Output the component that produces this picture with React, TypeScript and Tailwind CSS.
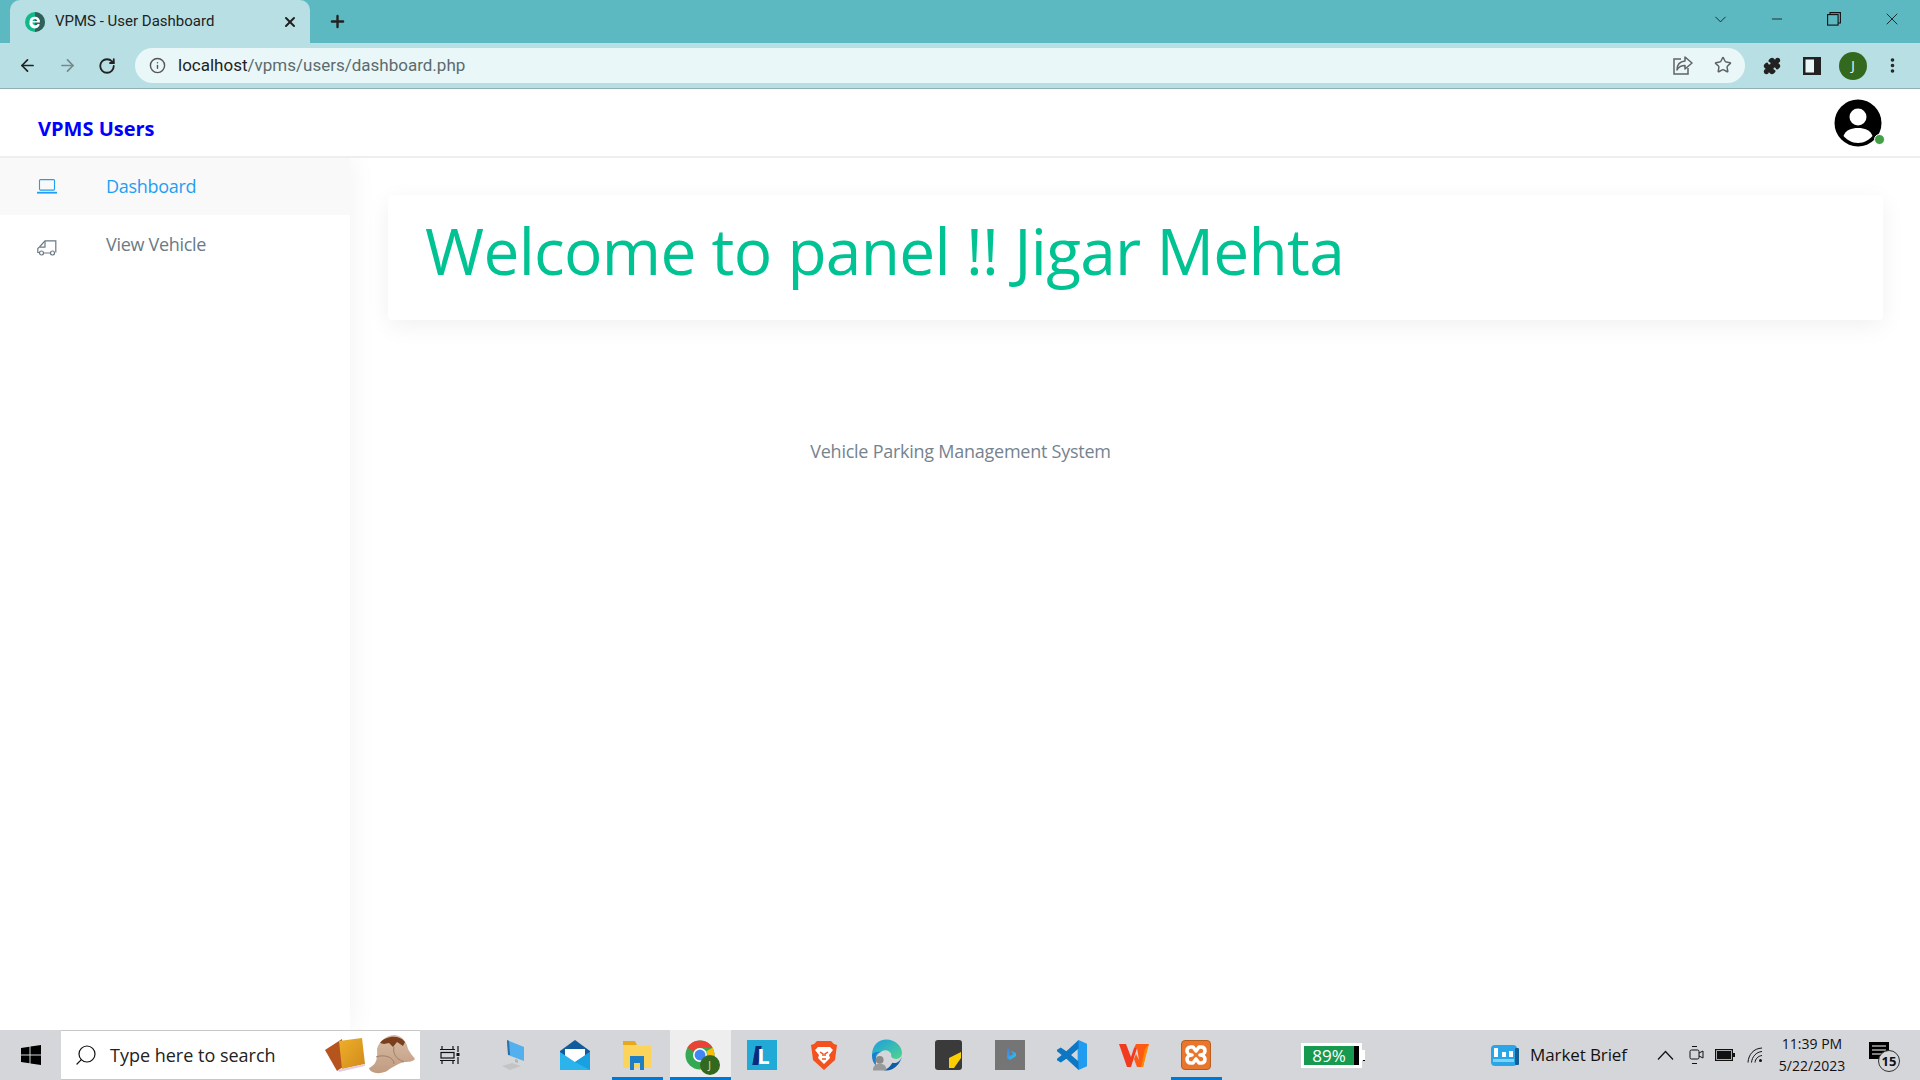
import React from "react";
import { ArrowLeft, ArrowRight, RotateCw, Info, Star, Puzzle, X, Plus, ChevronDown, Minus, MoreVertical, Search } from "lucide-react";

const Sans = "[font-family:'Open_Sans',sans-serif]";

function Favicon() {
  return (
    <svg width="20" height="20" viewBox="0 0 20 20">
      <circle cx="10" cy="10" r="10" fill="#10b98a" />
      <path d="M10 0a10 10 0 0 1 0 20z" fill="#3a4a50" opacity="0.8" />
      <path d="M4.500 10a5.300 5.300 0 0 1 10.400-1.400v2H7.300a3 3 0 0 0 5.600 1.100l1.900.8A5.300 5.300 0 0 1 4.500 10zm2.900-1h5a2.600 2.600 0 0 0-5 0z" fill="#fff" />
    </svg>
  );
}

function Avatar() {
  return (
    <div className="relative w-[48px] h-[48px]">
      <svg width="48" height="48" viewBox="0 0 48 48">
        <circle cx="24" cy="24" r="23.5" fill="#000" />
        <circle cx="24" cy="18" r="8.500" fill="#fff" />
        <path d="M9.500 37c2-6 8-8 14.500-8s12.500 2 14.500 8c-3 3.500-8 7-14.500 7S12.500 40.500 9.500 37z" fill="#fff" />
      </svg>
      <span className="absolute right-[-3px] bottom-[2px] w-[9px] h-[9px] rounded-full bg-[#43a047] border border-white box-content" />
    </div>
  );
}

function Chrome() {
  return (
    <div className="relative w-[30px] h-[30px] ml-[-2px]">
      <svg width="30" height="30" viewBox="0 0 32 32">
        <circle cx="16" cy="16" r="15.500" fill="#34a853" />
        <path d="M16 .5a15.500 15.500 0 0 1 13.400 7.750H16a7.750 7.750 0 0 0-6.700 3.900L2.600 8.300A15.500 15.500 0 0 1 16 .5z" fill="#ea4335" />
        <path d="M29.400 8.250A15.500 15.500 0 0 1 16 31.500l6.700-11.600A7.750 7.750 0 0 0 22.700 12z" fill="#fbbc05" />
        <circle cx="16" cy="16" r="7.500" fill="#fff" />
        <circle cx="16" cy="16" r="5.800" fill="#4285f4" />
      </svg>
      <span className={`absolute right-[-5px] bottom-[-5px] w-[20px] h-[20px] rounded-full bg-[#33691e] text-[#d8e4c8] text-[10px] flex items-center justify-center ${Sans}`}>J</span>
    </div>
  );
}

function TaskIcon({ active, light, children, w = 62, className = "" }: { active?: boolean; light?: boolean; children: React.ReactNode; w?: number; className?: string }) {
  return (
    <div className={`relative h-full flex items-center justify-center shrink-0 ${light ? "bg-[#eeeeee]" : ""} ${className}`} style={{ width: w }}>
      {children}
      {active && <span className={`absolute bottom-0 h-[3px] bg-[#0078d4] ${light ? "left-0 right-0" : "left-[6px] right-[5px]"}`} />}
    </div>
  );
}

export default function App() {
  return (
    <div className={`w-[1920px] h-[1080px] overflow-hidden flex flex-col bg-white ${Sans}`}>
      {/* Tab strip */}
      <div className="h-[43px] shrink-0 bg-[#5cb8c1] flex items-end relative z-10">
        <div className="ml-[10px] w-[300px] h-[43px] bg-[#b8e0e4] rounded-t-[10px] flex items-center pl-[15px] pr-[12px]">
          <Favicon />
          <span className="ml-[10px] text-[15px] text-[#222] font-['Roboto',sans-serif] flex-1">VPMS - User Dashboard</span>
          <X size={16} strokeWidth={3} color="#222" />
        </div>
        <div className="ml-[18px] h-[43px] flex items-center">
          <Plus size={19} strokeWidth={3} color="#222" />
        </div>
        <div className="ml-auto h-[43px] flex items-start">
          <div className="w-[58px] h-[38px] flex items-center justify-center"><ChevronDown size={19} strokeWidth={1.2} color="#222" /></div>
          <div className="w-[56px] h-[38px] flex items-center justify-center"><Minus size={16} strokeWidth={1.2} color="#111" /></div>
          <div className="w-[58px] h-[38px] flex items-center justify-center">
            <svg width="14" height="14" viewBox="0 0 14 14" fill="none" stroke="#111" strokeWidth="1.100"><rect x="0.600" y="2.600" width="10.500" height="10.500" /><path d="M3 2.600V.6h10.400v10.400h-2.300" /></svg>
          </div>
          <div className="w-[57px] h-[38px] flex items-center justify-center"><X size={20} strokeWidth={1} color="#111" /></div>
        </div>
      </div>
      {/* Toolbar */}
      <div className="h-[46px] shrink-0 bg-[#b8e0e4] border-b border-[#8fb0b5] flex items-center relative z-10">
        <div className="w-[135px] shrink-0 flex items-center pl-[18px] gap-[21px]">
          <ArrowLeft size={19} strokeWidth={2.200} color="#222" />
          <ArrowRight size={19} strokeWidth={2.200} color="#78898c" />
          <RotateCw size={18} strokeWidth={2.400} color="#222" />
        </div>
        <div className="w-[1610px] h-[35px] mb-[1px] rounded-full bg-[#e9f7f8] flex items-center pl-[14px] pr-[13px] shrink-0">
          <Info size={17} strokeWidth={2} color="#555" />
          <span className="ml-[12px] mt-[1px] text-[17px] leading-none text-[#222] font-['Roboto',sans-serif] flex-1">localhost<span className="text-[#5c6b6e]">/vpms/users/dashboard.php</span></span>
          <svg className="mr-[21px]" width="20" height="19" viewBox="0 0 20 19" fill="none" stroke="#5f6368" strokeWidth="1.500">
            <path d="M8 3H1v15h14v-6" />
            <path d="M12 1l7 6-7 6V9.500C8 9.500 5.500 11 4 14c0-5 3-8.500 8-9z" strokeLinejoin="round" />
          </svg>
          <Star size={18} strokeWidth={2} color="#5f6368" />
        </div>
        <div className="flex-1 flex items-center pl-[18px]">
          <Puzzle size={18} fill="#222" color="#222" />
          <svg className="ml-[22px]" width="18" height="18" viewBox="0 0 18 18"><rect width="18" height="18" fill="#222" /><rect x="2.500" y="2.500" width="8.500" height="13" fill="#e9f7f8" /></svg>
          <span className="ml-[18px] w-[28px] h-[28px] rounded-full bg-[#33691e] text-white text-[13px] flex items-center justify-center">J</span>
          <MoreVertical size={19} strokeWidth={2.600} color="#222" className="ml-[16px]" />
        </div>
      </div>
      {/* App header */}
      <div className="h-[69px] shrink-0 border-b-2 border-[#eeeeee] flex items-center justify-between pl-[38px] pr-[38px] bg-white relative z-10">
        <span className="text-[20px] font-bold text-[#0000ff] mt-[12px]">VPMS Users</span>
        <Avatar />
      </div>
      {/* Body */}
      <div className="flex-1 flex min-h-0">
        <aside className="w-[350px] shrink-0 bg-white shadow-[0_0_28px_rgba(0,0,0,0.06)] flex flex-col">
          <div className="h-[57px] bg-[#f9f9f9] flex items-center pl-[37px]">
            <svg width="20" height="15" viewBox="0 0 20 15" fill="none" stroke="#1e9ff2" strokeWidth="1.100"><rect x="2.500" y="0.600" width="15" height="10.500" rx="1" /><path d="M0 13.700h20" strokeWidth="1.800" /></svg>
            <span className="ml-[49px] text-[18px] tracking-[-0.3px] text-[#1e9ff2]">Dashboard</span>
          </div>
          <div className="h-[58px] flex items-center pl-[37px]">
            <svg className="mt-[7px]" width="20" height="16" viewBox="0 0 20 16" fill="none" stroke="#6a7a85" strokeWidth="1.200"><path d="M18.800 12.500V.8H8L2.500 7 .8 8.500v4h1.700" /><path d="M8.500 7.200H3M6.500 13h7M8 1v6" /><circle cx="4.500" cy="13" r="2" /><circle cx="15.500" cy="13" r="2" /></svg>
            <span className="ml-[49px] text-[18px] tracking-[-0.3px] text-[#6a7a85]">View Vehicle</span>
          </div>
        </aside>
        <main className="flex-1 min-w-0 pl-[38px] pr-[37px] pt-[37px] flex flex-col">
          <div className="h-[125px] bg-white rounded-[4px] shadow-[0_6px_24px_rgba(0,0,0,0.06)] pl-[37px] pt-[13px]">
            <h1 className="text-[64px] leading-[86px] tracking-[-0.7px] font-normal text-[#00c292]">Welcome to panel !! Jigar Mehta</h1>
          </div>
          <p className="text-[18px] tracking-[-0.25px] text-[#76838f] text-center mt-[118px] ml-[-350px]">Vehicle Parking Management System</p>
        </main>
      </div>
      {/* Taskbar */}
      <div className="h-[50px] shrink-0 bg-[#d5d6da] flex items-center relative z-10">
        <div className="w-[61px] h-full flex items-center justify-center">
          <svg width="20" height="20" viewBox="0 0 20 20" fill="#000"><path d="M0 3l8.500-1.200V9.500H0zM9.500 1.600L20 0v9.500H9.500zM0 10.500h8.500v7.700L0 17zM9.500 10.500H20V20L9.500 18.400z" /></svg>
        </div>
        <div className="w-[359px] h-full bg-white border-y border-[#c8c8c8] flex items-center pl-[13px] relative">
          <Search size={24} strokeWidth={1.200} color="#111" className="-scale-x-100" />
          <span className="ml-[12px] text-[18px] text-[#222]">Type here to search</span>
          <svg className="absolute left-[264px] top-[7px]" width="40" height="34" viewBox="0 0 40 34">
            <defs><linearGradient id="bk" x1="0" y1="0" x2="1" y2="1"><stop offset="0" stopColor="#eeb02a" /><stop offset="1" stopColor="#d18a1c" /></linearGradient></defs>
            <path d="M0 12L17 1l1 28-6 4z" fill="#b5541c" />
            <path d="M14 3l23-3 3 26-23 5z" fill="url(#bk)" />
            <path d="M13 32l27-6v2L14 34z" fill="#e3cde6" />
          </svg>
          <svg className="absolute left-[306px] top-[4px]" width="48" height="39" viewBox="0 0 48 39">
            <defs><linearGradient id="ht" x1="0" y1="0" x2="0" y2="1"><stop offset="0" stopColor="#d8bca5" /><stop offset="1" stopColor="#c09b80" /></linearGradient></defs>
            <path d="M2 33C8 30 11 26 10 14 12 6 20 0 28 0c8 1 12 8 13 14 2 4 5 7 7 10-2 3-8 3-11 3-7 2-13 6-17 9C12 40 3 38 2 33z" fill="url(#ht)" />
            <path d="M13 8C18 1 32-1 38 7l-2 4-6-4-4 5-4-4-5 1z" fill="#7b3f1d" />
            <path d="M9 22c8-3 18 0 18 7M27 12c-1 5 0 11 10 15" stroke="#a17f68" fill="none" />
          </svg>
        </div>
        <TaskIcon w={64} className="pr-[4px]">
          <svg width="20" height="18" viewBox="0 0 20 18" fill="none" stroke="#111" strokeWidth="1.200"><path d="M2 0v3M13 0v3M0 3.500h15M0 14.500h15M2 15v3M13 15v3" /><rect x="1" y="6.500" width="13" height="5.500" /><path d="M18 0v6M18 11v7" /><rect x="16.500" y="7" width="3" height="3" fill="#111" stroke="none" /></svg>
        </TaskIcon>
        <TaskIcon w={60}>
          <svg width="26" height="30" viewBox="0 0 26 30"><path d="M6 0l17 7v14L7 15z" fill="#52b0ee" /><path d="M6 0l2 1 1 14-2 0z" fill="#2a6fa8" /><path d="M14 19l3 1v3l-3-1z" fill="#b5b5b5" /><path d="M1 26l10-3 9 3-11 4z" fill="#c4c4c4" /></svg>
        </TaskIcon>
        <TaskIcon w={62}>
          <svg width="30" height="30" viewBox="0 0 30 30"><path d="M0 11L15 0l15 11v19H0z" fill="#135c9c" /><path d="M5 9h20v8L15 23 5 17z" fill="#fff" /><path d="M0 12l15 10 15-10v18H0z" fill="#2bb4ec" /><path d="M15 22l15-10v18z" fill="#18a0e0" /></svg>
        </TaskIcon>
        <TaskIcon w={62} active>
          <svg width="28" height="30" viewBox="0 0 28 30"><path d="M0 2h11l3 4h14v22H0z" fill="#fcd45c" /><path d="M0 1h12l2 4H0z" fill="#e5a81f" /><path d="M7 16h14v14h-4v-7h-6v7H7z" fill="#1e7fc4" /></svg>
        </TaskIcon>
        <TaskIcon w={61} light active className="ml-[2px]"><Chrome /></TaskIcon>
        <TaskIcon w={62}>
          <div className="w-[30px] h-[30px] bg-[#21aad6] flex items-center justify-center relative">
            <span className="absolute left-[7px] top-[6px] w-[6px] h-[19px] bg-[#0b2a78] -skew-x-[10deg]" />
            <span className="relative text-white font-bold text-[22px] leading-none pl-[3px]">L</span>
          </div>
        </TaskIcon>
        <TaskIcon w={62}>
          <svg width="26" height="30" viewBox="0 0 26 30"><path d="M6 1h14l3 3 3 1-2 15-11 10L2 20 0 5l3-1z" fill="#f4511e" /><path d="M7 7h12l3 3-4 5 1 3-6 6-6-6 1-3-4-5z" fill="#fff" /><path d="M9 12l3 2v2M17 12l-3 2v2M11 19h4" stroke="#f4511e" strokeWidth="1.500" fill="none" /></svg>
        </TaskIcon>
        <TaskIcon w={62}>
          <svg width="31" height="32" viewBox="0 0 32 32">
            <defs><linearGradient id="ed" x1="0" y1="0" x2="1" y2="1"><stop offset="0" stopColor="#1b9de2" /><stop offset="1" stopColor="#53d68a" /></linearGradient></defs>
            <path d="M1 16C1 6 8 0 16 0c9 0 16 7 16 14 0 4-3 6-6 6-4 0-6-2-5-5-2-4-6-5-10-3-4 2-6 5-6 9z" fill="url(#ed)" />
            <path d="M32 17c-2 9-9 15-16 15-2 0-3 0-4-1 6 0 8-4 10-7 3 1 8 0 10-7z" fill="#0f5ca8" />
            <path d="M1 16c0 4 1 8 4 11V18c0-3 3-5 7-5-5-1-10 0-11 3z" fill="#1b7fd1" />
            <circle cx="9" cy="21" r="4" fill="#8a8a8a" />
            <path d="M2 32c0-5 3-7 7-7s7 2 7 7z" fill="#9a9a9a" />
          </svg>
        </TaskIcon>
        <TaskIcon w={62}>
          <svg width="27" height="30" viewBox="0 0 27 30"><rect width="27" height="30" rx="3" fill="#3a3a3a" /><path d="M14 28V18L26 12v6l-7 10z" fill="#fbd000" /></svg>
        </TaskIcon>
        <TaskIcon w={62}>
          <svg width="30" height="30" viewBox="0 0 30 30">
            <defs><linearGradient id="bg" x1="0" y1="0" x2="1" y2="1"><stop offset="0" stopColor="#3b7df0" /><stop offset="1" stopColor="#2ec8e8" /></linearGradient></defs>
            <rect width="30" height="30" fill="#757575" />
            <path d="M12 8l2.500 1v7l4-2-2-1-.5-2.500 5 2.500v3l-6 4-3-2z" fill="url(#bg)" />
          </svg>
        </TaskIcon>
        <TaskIcon w={62}>
          <svg width="30" height="30" viewBox="0 0 32 32">
            <path d="M23 0l9 4v24l-9 4-1-2V2z" fill="#1f9cf0" />
            <path d="M23 0L10 12 4 8l-4 2.500V12l5 4-5 4v1.500L4 24l6-4 13 12V23l-8-7 8-7z" fill="#0d77c4" />
          </svg>
        </TaskIcon>
        <TaskIcon w={62}>
          <svg width="30" height="24" viewBox="0 0 30 24"><path d="M0 1h7l5 13 3-9h3l-6 19H8z" fill="#f23a1e" /><path d="M18 5h-3l2-4h13l-2 5-4 18h-6l-3-8 2-5 3 6z" fill="#ff5a14" /><path d="M22 24l4-18 4-5-6 23z" fill="#ff8a00" /></svg>
        </TaskIcon>
        <TaskIcon w={62} active>
          <div className="w-[30px] h-[30px] rounded-[4px] bg-[#e8762c] border border-[#b95d1f] flex items-center justify-center">
            <svg width="22" height="20" viewBox="0 0 22 20" fill="none" stroke="#fff" strokeWidth="3.600" strokeLinejoin="round"><path d="M6 2h2l3 4 3-4h2c3 0 4 2 4 4s-2 4-5 4c3 0 5 2 5 4s-1 4-4 4h-2l-3-4-3 4H6c-3 0-4-2-4-4s2-4 5-4c-3 0-5-2-5-4s1-4 4-4z" /></svg>
          </div>
        </TaskIcon>
        <div className="ml-[74px] w-[61px] h-[25px] bg-white shrink-0 flex items-center p-[3px] relative">
          <div className="flex-1 h-full bg-[#179a4f] flex items-center justify-center text-white text-[17px] leading-none">89%</div>
          <div className="w-[5px] h-full bg-black" />
          <span className="absolute right-[-3px] top-[7px] w-[3px] h-[10px] bg-white" />
          <span className="absolute right-[-3px] top-[17px] w-[2px] h-[1px] bg-black" />
        </div>
        <div className="flex-1" />
        <div className="flex items-center h-full">
          <svg width="28" height="21" viewBox="0 0 28 21"><rect width="26" height="21" rx="4" fill="#2aa5e8" /><rect x="24" y="3" width="4" height="17" rx="1" fill="#135e96" /><rect x="3" y="3" width="4" height="9" fill="#fff" /><rect x="11" y="7" width="4" height="5" fill="#fff" /><rect x="18" y="6" width="4" height="6" fill="#fff" /><rect x="2" y="14" width="21" height="3" fill="#7fd3f7" /></svg>
          <span className="ml-[11px] text-[17px] tracking-[-0.1px] text-[#111] w-[112px]">Market Brief</span>
          <svg className="ml-[15px]" width="17" height="10" viewBox="0 0 17 10" fill="none" stroke="#111" strokeWidth="1.200"><path d="M1 9.500l7.500-8 7.500 8" /></svg>
          <svg className="ml-[15px]" width="16" height="20" viewBox="0 0 16 20" fill="none" stroke="#111" strokeWidth="1"><rect x="1" y="5" width="9" height="9" rx="1.500" /><path d="M10 8l4-2v7l-4-2M3 1.500h5M3 18.500h5" /></svg>
          <svg className="ml-[10px]" width="20" height="12" viewBox="0 0 20 12"><rect x="0.600" y="0.600" width="16.800" height="10.800" fill="none" stroke="#111" strokeWidth="1.200" /><rect x="2" y="2" width="14" height="8" fill="#111" /><rect x="18" y="4" width="2" height="4" fill="#111" /></svg>
          <svg className="ml-[12px]" width="16" height="16" viewBox="0 0 16 16" fill="none" stroke="#111" strokeWidth="1"><path d="M1 15.500C1.500 7.500 6.500 1.500 15 1M4.500 15.500C5 10 9 5 15 4.500M8 15.500c.3-3.500 3-6.500 7-7" /><circle cx="13.500" cy="13.500" r="1.500" fill="#111" stroke="none" /></svg>
          <div className="ml-[4px] w-[90px] flex flex-col items-center text-[14px] leading-[22px] text-[#111] mt-[-1px]">
            <span>11:39 PM</span>
            <span>5/22/2023</span>
          </div>
          <div className="ml-[12px] mr-[19px] relative w-[32px] h-[30px]">
            <svg className="absolute left-0 top-[2px]" width="20" height="17" viewBox="0 0 20 17"><rect width="20" height="17" fill="#000" /><path d="M3 4h14M3 8h14M3 12h10" stroke="#fff" /></svg>
            <span className="absolute left-[9px] top-[10px] w-[22px] h-[22px] rounded-full bg-[#d5d6da] border border-[#333] flex items-center justify-center text-[13px] font-bold text-[#111] leading-none">15</span>
          </div>
        </div>
      </div>
    </div>
  );
}
